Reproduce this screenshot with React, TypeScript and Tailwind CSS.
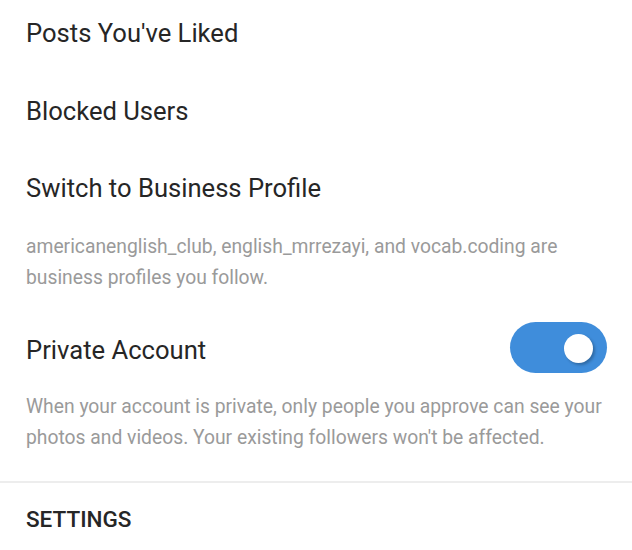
export default function App() {
  return (
    <div className="h-[550px] w-[632px] overflow-hidden bg-white font-['Roboto',sans-serif] text-[#262626]">
      <div className="px-[26px]">
        <div className="pt-[15px] text-[25.6px] leading-[36px]">Posts You've Liked</div>
        <div className="pt-[42px] text-[25.6px] leading-[36px]">Blocked Users</div>
        <div className="pt-[41px] text-[25.6px] leading-[36px]">Switch to Business Profile</div>
        <p className="pt-[25px] text-[19.3px] leading-[31px] text-[#9a9a9a]">
          americanenglish_club, english_mrrezayi, and vocab.coding are
          <br />
          business profiles you follow.
        </p>
        <div className="flex items-start justify-between pt-[29px]">
          <div className="pt-[10px] text-[25.6px] leading-[36px]">Private Account</div>
          <div className="mr-[-1px] flex h-[51px] w-[97px] items-center justify-end rounded-full bg-[#3f8ddb] pr-[14px]">
            <div className="mt-[2px] h-[29px] w-[29px] rounded-full bg-white shadow-[2px_2px_3px_rgba(0,0,0,0.25)]" />
          </div>
        </div>
        <p className="pt-[18px] text-[19.3px] leading-[31px] text-[#9a9a9a]">
          When your account is private, only people you approve can see your
          <br />
          photos and videos. Your existing followers won't be affected.
        </p>
      </div>
      <div className="mt-[28px] h-[2px] bg-[#ededed]" />
      <div className="px-[26px] pt-[21px] text-[22.5px] font-medium leading-[30px]">SETTINGS</div>
    </div>
  );
}
